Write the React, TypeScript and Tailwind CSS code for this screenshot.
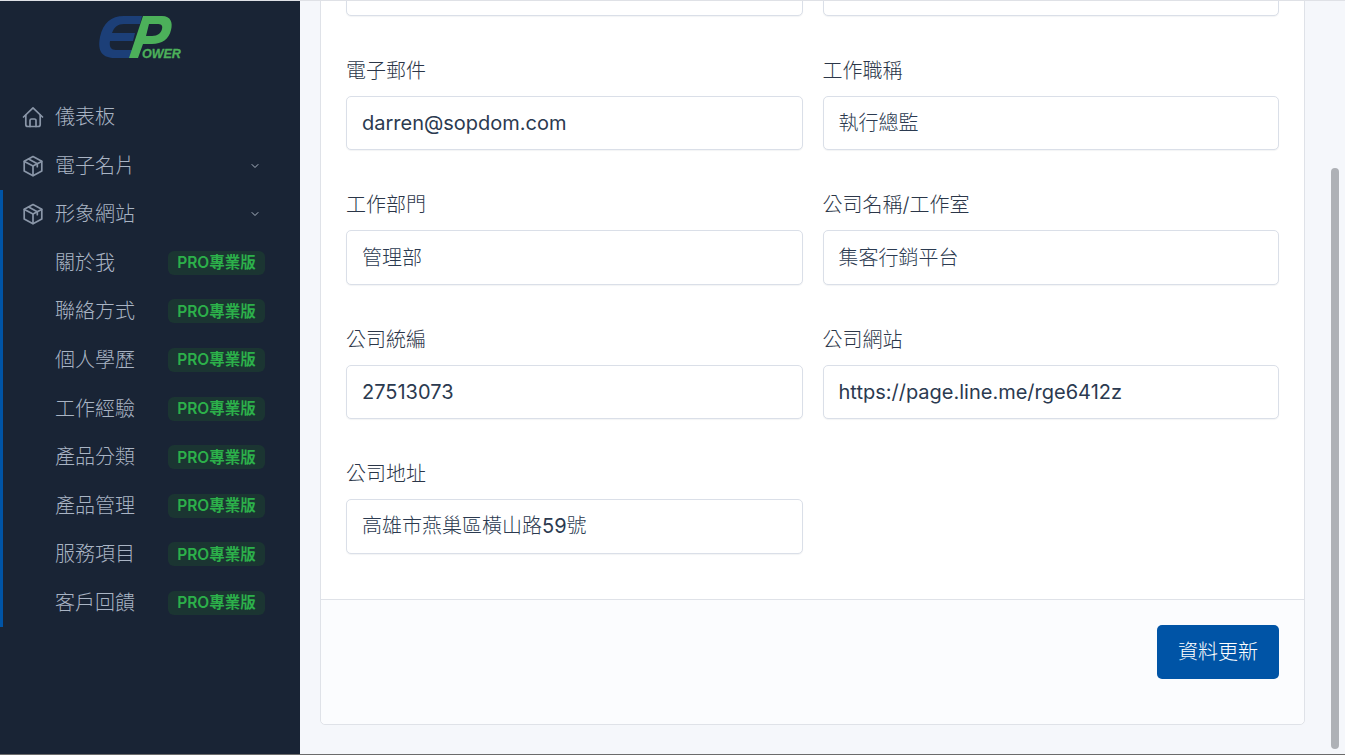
import React from "react";
import { ChevronDown } from "lucide-react";

const FONT = "font-['Inter','Noto_Sans_CJK_TC',sans-serif]";

function HomeIcon() {
  return (
    <svg width="22" height="22" viewBox="0 0 22 22" fill="none" stroke="#8a96a8" strokeWidth="1.7" strokeLinecap="round" strokeLinejoin="round" className="shrink-0">
      <path d="M1.5 11 11 1.8 20.5 11" />
      <path d="M3.8 9v9.5a2 2 0 0 0 2 2h10.4a2 2 0 0 0 2-2V9" />
      <path d="M8 20.5v-6a1.5 1.5 0 0 1 1.5-1.5h3a1.5 1.5 0 0 1 1.5 1.5v6" />
    </svg>
  );
}

function BoxIcon() {
  return (
    <svg width="20" height="22" viewBox="0 0 20 22" fill="none" stroke="#8a96a8" strokeWidth="1.7" strokeLinecap="round" strokeLinejoin="round" className="shrink-0">
      <path d="M10 1.5 18.8 6.3v9.6L10 20.7 1.2 15.9V6.3Z" />
      <path d="M1.4 6.4 10 11l8.6-4.6" />
      <path d="M10 11v9.5" />
      <path d="M5.6 3.9 14.3 8.7v3" />
    </svg>
  );
}

function Logo() {
  return (
    <svg width="120" height="70" viewBox="0 0 120 70" className="block">
      <path fill="#1c3f78" d="M62 11H44C31 11 23 18 20 32C17 47 23 53 35 53H51L53 45H36C31 45 29 42 30 36H53L55 28H32C34 22 38 19 44 19H60Z" />
      <path fill="#4cb05a" fillRule="evenodd" d="M63 11H82C91 11 93 18 91 25C89 34 82 39 72 39H63L58 53H49ZM69 19 66 31H72C78 31 81 28 82 24C83 20 81 19 77 19Z" />
      <text x="62" y="53" fontFamily="'Liberation Sans',sans-serif" fontStyle="italic" fontWeight="700" fontSize="12.5" fill="#4cb05a" stroke="#4cb05a" strokeWidth="0.3">OWER</text>
    </svg>
  );
}

function NavRow({ icon, label, chevron }: { icon: React.ReactNode; label: string; chevron?: boolean }) {
  return (
    <div className="flex h-[48.6px] items-center pl-[22px] pr-[39px]">
      <span className="flex w-[22px] justify-center">{icon}</span>
      <span className="ml-[11px] flex-1 text-[20px] font-light leading-none text-[#a9b4c4]">{label}</span>
      {chevron && <ChevronDown size={12} strokeWidth={2} className="text-[#aab4c2]" />}
    </div>
  );
}

function SubRow({ label }: { label: string }) {
  return (
    <div className="flex h-[48.6px] items-center pl-[55px] pr-[35px]">
      <span className="flex-1 text-[20px] font-light leading-none text-[#a9b4c4]">{label}</span>
      <span className="flex h-6 w-[97px] items-center justify-center rounded-md bg-[#1b3532] text-[15.5px] font-semibold text-[#2cb04a]">PRO專業版</span>
    </div>
  );
}

function Field({ label, children, latin }: { label?: string; children?: React.ReactNode; latin?: boolean }) {
  return (
    <div className="flex flex-col">
      {label && <label className="mb-[8px] h-[33px] text-[20px] font-light leading-[33px] text-[#2b3648]">{label}</label>}
      <div className={`flex h-[54.4px] items-center rounded-[5px] border border-[#dadfe8] bg-white px-[15px] text-[20px] text-[#2b3a50] shadow-[0_1px_1px_rgba(20,30,50,0.05)] ${latin ? "font-normal" : "font-light"}`}>
        <span>{children}</span>
      </div>
    </div>
  );
}

const sub = ["關於我", "聯絡方式", "個人學歷", "工作經驗", "產品分類", "產品管理", "服務項目", "客戶回饋"];

export default function App() {
  return (
    <div className={`${FONT} flex h-[755px] w-[1345px] flex-col overflow-hidden`}>
      <div className="h-px shrink-0 bg-[#dfe1e6]" />
      <div className="flex min-h-0 flex-1">
        <aside className="flex w-[300px] shrink-0 flex-col bg-[#192435]">
          <div className="ml-[80px] mt-1 h-[70px]">
            <Logo />
          </div>
          <nav className="mt-[17.7px]">
            <NavRow icon={<HomeIcon />} label="儀表板" />
            <NavRow icon={<BoxIcon />} label="電子名片" chevron />
            <div className="border-l-[3px] border-[#0054a6] [&>*]:-ml-[3px]">
              <NavRow icon={<BoxIcon />} label="形象網站" chevron />
              {sub.map((s) => (
                <SubRow key={s} label={s} />
              ))}
            </div>
          </nav>
        </aside>
        <main className="relative flex min-w-0 flex-1 flex-col justify-end overflow-hidden bg-[#f5f7fb] pb-[29px] pl-5 pr-10">
          <div className="shrink-0 rounded-b-[5px] border border-[#dfe2e8] bg-white">
            <div className="grid grid-cols-2 gap-x-5 gap-y-[39px] px-[25px] pb-[45.4px] pt-[80px]">
              <Field />
              <Field />
              <Field label="電子郵件" latin>darren@sopdom.com</Field>
              <Field label="工作職稱">執行總監</Field>
              <Field label="工作部門">管理部</Field>
              <Field label="公司名稱/工作室">集客行銷平台</Field>
              <Field label="公司統編" latin>27513073</Field>
              <Field label="公司網站" latin>https://page.line.me/rge6412z</Field>
              <Field label="公司地址">
                高雄市燕巢區橫山路<span className="font-normal">59</span>號
              </Field>
            </div>
            <div className="flex h-[125px] items-start justify-end rounded-b-[5px] border-t border-[#dfe2e8] bg-[#fbfcfe] px-[25px] pt-[25px]">
              <button className="flex h-[54px] w-[122px] items-center justify-center rounded-[5px] bg-[#0054a6] text-[20px] font-light text-white">資料更新</button>
            </div>
          </div>
          <div className="absolute right-[6px] top-[167px] h-[581px] w-2 rounded-full bg-[#aeb1b6]" />
        </main>
      </div>
      <div className="h-px shrink-0 bg-[#6b6b6b]" />
    </div>
  );
}
